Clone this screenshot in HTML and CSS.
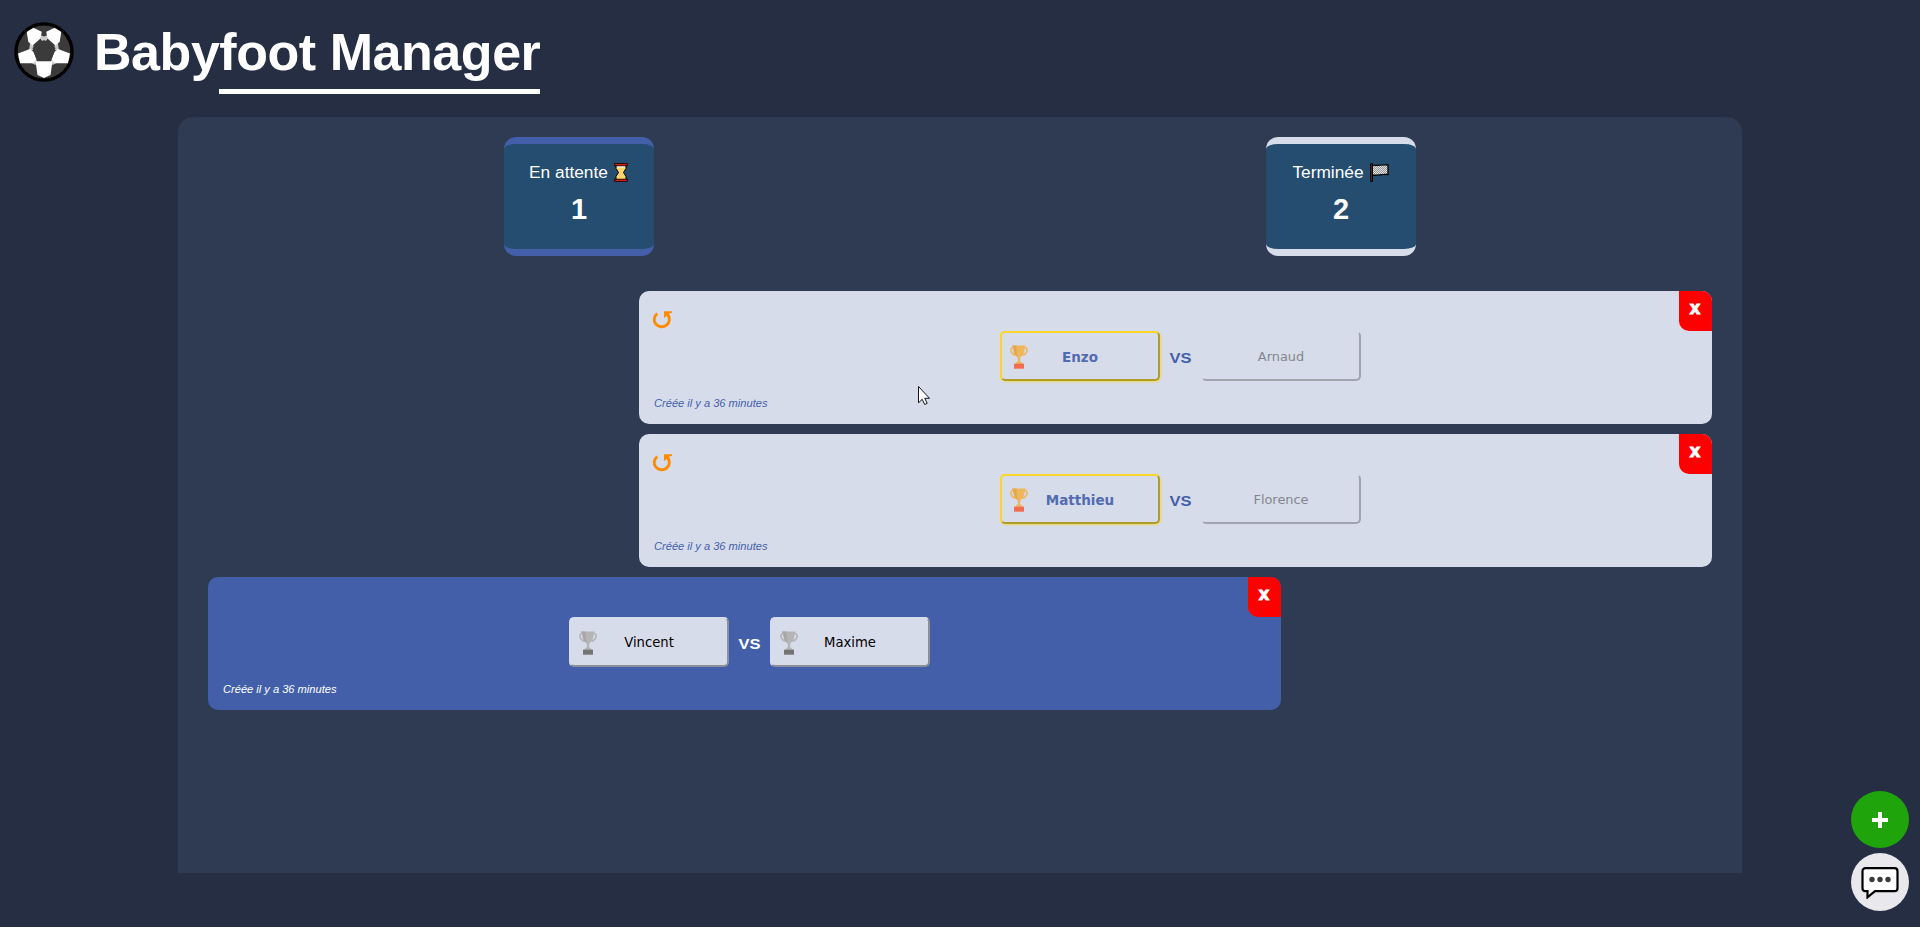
FILE: index.html
```html
<!DOCTYPE html>
<html lang="fr">
<head>
<meta charset="utf-8">
<title>Babyfoot Manager</title>
<link rel="stylesheet" href="styles.css">
</head>
<body>
<svg class="sprites" width="0" height="0">
  <symbol id="trophy" viewBox="0 0 18 24">
    <path d="M4 2.800H2.200C-.2 4 .8 9.200 5.500 10.300M14 2.800h1.800c2.400 1.200 1.400 6.400-3.300 7.500" fill="none" stroke="var(--cup)" stroke-width="1.600"/>
    <path d="M2.300 .5h13.400v1.300h-1c0 5-1.300 8.700-4.200 10.200l-.5 4 2.500 2v1h-7v-1L8 16l-.5-4C4.600 10.500 3.300 6.800 3.300 1.800h-1z" fill="var(--cup)"/>
    <path d="M2.300 .5h4.200c0 5 .3 9 1.500 11.800C4.600 10.500 3.300 6.800 3.300 1.800h-1z" fill="var(--shade)"/>
    <path d="M4 18.700h10v5H4z" fill="var(--base)"/>
  </symbol>
  <symbol id="undo" viewBox="0 0 20 18">
    <path d="M5.300 2.600A7.600 7.300 0 1 0 15.800 4" fill="none" stroke="#ff8c00" stroke-width="2.900"/>
    <path d="M12 .3h8v1.400l-2.800.7 1 4-2 .8-1.700-2.400L12 7.300z" fill="#ff8c00"/>
  </symbol>
</svg>
<header class="header">
  <svg class="ball" viewBox="0 0 60 60">
    <defs><clipPath id="disc"><circle cx="30" cy="30" r="26.500"/></clipPath></defs>
    <circle cx="30" cy="30" r="28.100" fill="#3b3b3b" stroke="#000" stroke-width="3.400"/>
    <g clip-path="url(#disc)">
      <g fill="#c9c9c9">
        <path d="M27 13.500l3 1 3-1v4.500l-3 1.500-3-1.500z"/>
        <path d="M16 21.500l3.500 2-.3 4.500-4.200 1z"/>
        <path d="M44 21.500l-3.500 2 .3 4.500 4.200 1z"/>
        <path d="M17.500 41l4.500-4.500 1.500 3.500-2 3z"/>
        <path d="M42.500 41L38 36.500 36.500 40l2 3z"/>
      </g>
      <g fill="#fff">
        <path d="M12.700 9.700l6.600-4 8.400 4-1 6.600-8.400 7.400-4-4z"/>
        <path d="M47.300 9.700l-6.600-4-8.400 4 1 6.600 8.400 7.400 4-4z"/>
        <path d="M4 31.500L16 27l3.300 2.700 3.400 7.600-3.400 4H6z"/>
        <path d="M56 31.500L44 27l-3.300 2.700-3.400 7.600 3.400 4H54z"/>
        <path d="M21.500 39h17l-2 14-6.500 3-6.500-3z"/>
      </g>
      <path d="M30 18l11.500 8-4.500 13.300H23L18.500 26z" fill="#3b3b3b"/>
    </g>
  </svg>
  <h1 class="title">Babyfoot Manager</h1>
</header>
<main class="panel">
  <section class="stats">
    <div class="stat waiting">
      <div class="stat-label">En attente
        <svg class="glass" viewBox="0 0 14 19"><path d="M2 2h10v3.500L9.500 9.500l2.500 4V17H2v-3.500l2.500-4L2 5.500z" fill="#ffd469" stroke="#000" stroke-width="1"/><path d="M3 3.500h8" stroke="#fff" stroke-width="2"/><path d="M.6.6h12.800v2.200H.6zM.6 16.200h12.800v2.200H.6z" fill="#e81c0c" stroke="#000" stroke-width=".8"/></svg>
      </div>
      <div class="stat-count">1</div>
    </div>
    <div class="stat done">
      <div class="stat-label">Terminée
        <svg class="flag" viewBox="0 0 19 19"><defs><pattern id="check" width="2" height="2" patternUnits="userSpaceOnUse"><path d="M0 0h2v2H0z" fill="#ddd"/><path d="M0 0h1v1H0zM1 1h1v1H1z" fill="#999"/></pattern></defs><path d="M2 2c5 1.500 9-.8 16 0v9.500c-7-.8-10 1.500-16 .6z" fill="url(#check)" stroke="#000" stroke-width="1.300"/><path d="M.7.700h1.800v17.800H.7z" fill="#702020" stroke="#000" stroke-width=".9"/></svg>
      </div>
      <div class="stat-count">2</div>
    </div>
  </section>
  <section class="matches">
    <article class="match finished">
      <svg class="undo"><use href="#undo"/></svg><button class="close">x</button>
      <div class="teams">
        <button class="player winner"><svg class="trophy"><use href="#trophy"/></svg>Enzo</button><span class="vs">vs</span><button class="player loser">Arnaud</button>
      </div>
      <p class="created">Créée il y a 36 minutes</p>
    </article>
    <article class="match finished">
      <svg class="undo"><use href="#undo"/></svg><button class="close">x</button>
      <div class="teams">
        <button class="player winner"><svg class="trophy"><use href="#trophy"/></svg>Matthieu</button><span class="vs">vs</span><button class="player loser">Florence</button>
      </div>
      <p class="created">Créée il y a 36 minutes</p>
    </article>
    <article class="match pending">
      <button class="close">x</button>
      <div class="teams">
        <button class="player"><svg class="trophy"><use href="#trophy"/></svg>Vincent</button><span class="vs">vs</span><button class="player"><svg class="trophy"><use href="#trophy"/></svg>Maxime</button>
      </div>
      <p class="created">Créée il y a 36 minutes</p>
    </article>
  </section>
</main>
<div class="actions">
  <button class="round add"><svg viewBox="0 0 16 16" width="16" height="16"><path d="M8 0v16M0 8h16" stroke="#fff" stroke-width="4"/></svg></button>
  <button class="round chat"><svg viewBox="0 0 38 33" width="38" height="33"><path d="M4.500 2.200h29a3 3 0 0 1 3 3v17a3 3 0 0 1-3 3H14L6.500 31.300v-6.100h-2a3 3 0 0 1-3-3v-17a3 3 0 0 1 3-3z" fill="#fff" stroke="#000" stroke-width="2.200"/><g fill="#3b3b3b"><circle cx="11" cy="13.500" r="2.700"/><circle cx="19" cy="13.500" r="2.700"/><circle cx="27" cy="13.500" r="2.700"/></g></svg></button>
</div>
<svg class="cursor" viewBox="0 0 12 19"><path d="M.5.5v16.300l3.700-3.500 2.500 5.200 2.500-1.200-2.500-5h4.800z" fill="#fff" stroke="#10141f"/></svg>
</body>
</html>
```
FILE: styles.css
```css
* { box-sizing: border-box; }
body { margin: 0; height: 927px; overflow: hidden; background: #262e43; color: #fff; font-family: "Liberation Sans", Arial, sans-serif; }
button { font-family: "DejaVu Sans", Verdana, sans-serif; padding: 0; }
.sprites { display: block; height: 0; }
.header { height: 117px; display: flex; align-items: flex-start; padding: 21px 0 0 14px; gap: 20px; }
.ball { width: 60px; height: 60px; margin-top: 1px; }
.title { margin: 0; height: 73px; font-size: 52px; line-height: 62px; letter-spacing: -.45px; background: linear-gradient(#fff, #fff) no-repeat right bottom / 321px 5px; width: 446px; white-space: nowrap; }
.panel { width: 1564px; height: 756px; margin: 0 auto; padding: 20px; background: #2f3b53; border-radius: 15px 15px 0 0; }
.stats { display: flex; justify-content: space-around; margin-bottom: 35px; }
.stat { width: 150px; height: 119px; background: #254d70; border: 0 solid; border-width: 7px 0; border-radius: 12px; text-align: center; padding-top: 17px; }
.waiting { border-color: #435fa9; }
.done { border-color: #d7dceb; }
.stat-label { display: flex; justify-content: center; align-items: center; gap: 6px; height: 23px; padding-right: 1px; font-size: 17.300px; }
.glass { width: 14px; height: 19px; }
.flag { width: 19px; height: 19px; }
.stat-count { margin-top: 9px; font-size: 29px; line-height: 33px; font-weight: bold; }
.matches { display: flex; flex-direction: column; gap: 10px; padding: 0 10px; }
.match { position: relative; width: 1073px; height: 133px; border-radius: 10px; padding: 40px 0 0 10px; }
.finished { align-self: flex-end; background: #d7dceb; color: #435fa9; }
.pending { background: #435fa9; }
.teams { display: flex; justify-content: center; align-items: center; height: 50px; }
.player { position: relative; width: 160px; height: 50px; border: 2px solid; border-color: #d7dceb #8c8f99 #8c8f99 #d7dceb; border-radius: 5px; background: #d7dceb; color: #000; font-size: 13.200px; padding-top: 1px; --cup: #b5b5b5; --shade: #a7a7a7; --base: #747474; }
.winner { border-color: #fad62d #b09c27 #b09c27 #fad62d; box-shadow: 1px 1px 2px #fad62dbb; color: #526bb0; font-weight: bold; font-size: 13.500px; --cup: #efb75c; --shade: #e3a653; --base: #f36c4f; }
.loser { border-color: #d7dceb #a0a4af #a0a4af #d7dceb; color: #83868e; font-size: 12.900px; }
.trophy { position: absolute; left: 7.500px; top: 12px; width: 18px; height: 24px; }
.vs { width: 41px; text-align: center; font-size: 21px; font-weight: bold; font-variant: small-caps; transform: scaleX(1.1); }
.created { margin: 16px 0 0 5px; font-size: 11.100px; line-height: 13px; font-style: italic; }
.undo { position: absolute; left: 13px; top: 20px; width: 20px; height: 18px; }
.close { position: absolute; right: 0; top: 0; width: 33px; height: 40px; border: 0; border-radius: 0 10px 0 10px; background: #f00; color: #fff; font-size: 17px; font-weight: bold; padding: 0 1px 6px 0; -webkit-text-stroke: .8px #fff; }
.actions { position: fixed; right: 11px; bottom: 16px; display: flex; flex-direction: column; gap: 5px; }
.round { width: 58px; height: 58px; border: 0; border-radius: 50%; display: flex; align-items: center; justify-content: center; }
.add { background: #1fa40c; height: 57px; }
.chat { background: #e9e8ed; }
.cursor { position: fixed; left: 918px; top: 386px; width: 12px; height: 19px; }
```
